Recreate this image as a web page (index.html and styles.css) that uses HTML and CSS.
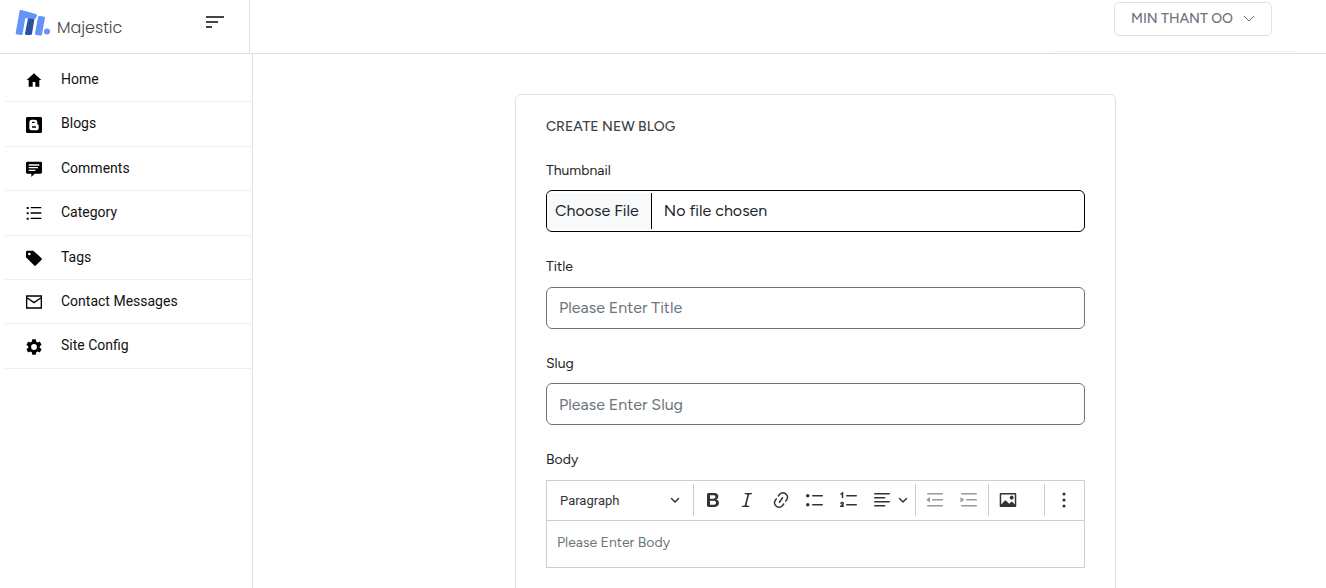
FILE: index.html
```html
<!DOCTYPE html>
<html lang="en">
<head>
<meta charset="utf-8">
<title>Majestic - Create New Blog</title>
<link rel="stylesheet" href="styles.css">
</head>
<body>
<div class="app">
  <header class="topbar">
    <div class="brand-area">
      <a class="brand" href="#">
        <svg class="brand-mark" width="36" height="28" viewBox="0 0 36 28" aria-hidden="true">
          <g stroke-width="3" stroke-linejoin="round">
            <path d="M14.500 9.500 18 9.500 15.500 24.500 11.500 24.500z" fill="#2c519f" stroke="#2c519f"/>
            <path d="M6 2.500 20.500 6.500 19.500 8.500 9 7.500 6.200 24.500 2.200 24z" fill="#6494fa" stroke="#6494fa"/>
            <path d="M24.500 8.500 28.500 9 25.500 25 21.500 24.500z" fill="#6494fa" stroke="#6494fa"/>
          </g>
          <circle cx="32" cy="22.500" r="3" fill="#6494fa"/>
        </svg>
        <span class="brand-name">Majestic</span>
      </a>
      <button class="icon-button" type="button" aria-label="Toggle menu">
        <svg width="20" height="14" viewBox="0 0 20 14" fill="none" stroke="#444" stroke-width="2" aria-hidden="true"><path d="M1 2h18M1 7h12M1 12h6"/></svg>
      </button>
    </div>
    <div class="user-area">
      <button class="user-button" type="button">MIN THANT OO
        <svg width="12" height="8" viewBox="0 0 12 8" fill="none" stroke="currentColor" aria-hidden="true"><path d="m1 2 5 5 5-5"/></svg>
      </button>
    </div>
  </header>
  <div class="body-row">
    <nav class="sidebar" aria-label="Main">
      <a class="nav-item" href="#"><svg viewBox="0 0 24 24" aria-hidden="true"><path d="M12 2 1 12h3v10h6v-7h4v7h6V12h3z"/></svg>Home</a>
      <a class="nav-item" href="#"><svg viewBox="0 0 24 24" aria-hidden="true"><path fill-rule="evenodd" d="M2 0h20a2 2 0 0 1 2 2v20a2 2 0 0 1-2 2H2a2 2 0 0 1-2-2V2a2 2 0 0 1 2-2zm7 4a4 4 0 0 0-4 4v8a4 4 0 0 0 4 4h6a4 4 0 0 0 4-4v-3a2 2 0 0 0-2-2V8a4 4 0 0 0-4-4zm0 3h4v2H9zm0 7h6v2H9z"/></svg>Blogs</a>
      <a class="nav-item" href="#"><svg viewBox="0 0 24 24" aria-hidden="true"><path fill-rule="evenodd" d="M2 1h20a2 2 0 0 1 2 2v14a2 2 0 0 1-2 2h-9l-5 5v-5H2a2 2 0 0 1-2-2V3a2 2 0 0 1 2-2zm2 4v2h16V5zm0 4v2h14V9zm0 4v2h10v-2z"/></svg>Comments</a>
      <a class="nav-item" href="#"><svg viewBox="0 0 24 24" aria-hidden="true"><path d="M1 3h3v3H1zm6 0h16v2H7zM1 11h3v3H1zm6 0h16v2H7zM1 19h3v3H1zm6 0h16v2H7z"/></svg>Category</a>
      <a class="nav-item" href="#"><svg viewBox="0 0 24 24" aria-hidden="true"><path fill-rule="evenodd" d="M2 1h9l12 11a2 2 0 0 1 0 3l-8 8a2 2 0 0 1-3 0L0 11V3a2 2 0 0 1 2-2zm3 3a2 2 0 1 0 0 4 2 2 0 0 0 0-4z"/></svg>Tags</a>
      <a class="nav-item" href="#"><svg viewBox="0 0 24 24" stroke="#000" stroke-width="2" aria-hidden="true"><path fill="none" d="M1 3h22v18H1zM2 6l10 7 10-7"/></svg>Contact Messages</a>
      <a class="nav-item" href="#"><svg viewBox="2 2 20 20" aria-hidden="true"><path d="M19.140 12.940c.04-.3.06-.61.06-.94s-.02-.64-.07-.94l2.030-1.580a.49.49 0 0 0 .12-.61l-1.920-3.320a.49.49 0 0 0-.59-.22l-2.390.96a7 7 0 0 0-1.620-.94l-.36-2.540a.48.48 0 0 0-.48-.41h-3.840a.48.48 0 0 0-.47.41l-.36 2.540a7 7 0 0 0-1.620.94l-2.390-.96a.48.48 0 0 0-.59.22L2.740 8.870a.48.48 0 0 0 .12.61l2.030 1.580a6 6 0 0 0 0 1.880l-2.030 1.580a.49.49 0 0 0-.12.61l1.920 3.320c.12.22.37.29.59.22l2.390-.96c.5.38 1.030.7 1.620.94l.36 2.540c.05.24.24.41.48.41h3.840c.24 0 .44-.17.47-.41l.36-2.540a7 7 0 0 0 1.620-.94l2.390.96c.22.08.47 0 .59-.22l1.920-3.320a.48.48 0 0 0-.12-.61zM12 15.600A3.600 3.600 0 1 1 12 8.400a3.600 3.600 0 0 1 0 7.200z"/></svg>Site Config</a>
    </nav>
    <main class="content">
      <form class="card">
        <h1 class="card-title">CREATE NEW BLOG</h1>
        <div class="field">
          <label for="thumbnail">Thumbnail</label>
          <input class="control file-control" id="thumbnail" type="file">
        </div>
        <div class="field">
          <label for="title">Title</label>
          <input class="control" id="title" type="text" placeholder="Please Enter Title">
        </div>
        <div class="field">
          <label for="slug">Slug</label>
          <input class="control" id="slug" type="text" placeholder="Please Enter Slug">
        </div>
        <div class="field">
          <label for="body">Body</label>
          <div class="editor">
            <div class="toolbar" role="toolbar" aria-label="Editor toolbar">
              <select class="heading-select" aria-label="Heading"><option>Paragraph</option><option>Heading 1</option></select>
              <span class="separator"></span>
              <button class="tool" type="button" aria-label="Bold"><svg viewBox="0 0 20 20"><path d="M10.187 17H5.773c-.637 0-1.092-.138-1.364-.415-.273-.277-.409-.718-.409-1.323V4.738c0-.617.14-1.062.419-1.332.279-.27.73-.406 1.354-.406h4.680c.69 0 1.288.041 1.793.124.506.083.96.242 1.360.478.341.197.644.447.906.75a3.262 3.262 0 0 1 .808 2.162c0 1.401-.722 2.426-2.167 3.075C15.050 10.175 16 11.315 16 13.010a3.756 3.756 0 0 1-2.296 3.504 6.100 6.100 0 0 1-1.517.377c-.571.073-1.238.11-2 .11zm-.217-6.217H7v4.087h3.069c1.977 0 2.965-.69 2.965-2.072 0-.707-.256-1.220-.768-1.537-.512-.319-1.277-.478-2.296-.478zM7 5.130v3.619h2.606c.729 0 1.292-.067 1.690-.2a1.600 1.600 0 0 0 .91-.765c.165-.267.247-.566.247-.897 0-.707-.26-1.176-.778-1.409-.519-.232-1.310-.348-2.375-.348z"/></svg></button>
              <button class="tool" type="button" aria-label="Italic"><svg viewBox="0 0 20 20"><path d="m9.586 14.633.021.004c-.036.335.095.655.393.962.082.083.173.15.274.201h1.474a.6.6 0 1 1 0 1.200H5.304a.6.6 0 0 1 0-1.200h1.150c.474-.07.809-.182 1.005-.334.157-.122.291-.32.404-.597l2.416-9.550a1.053 1.053 0 0 0-.281-.823 1.120 1.120 0 0 0-.442-.296H8.150a.6.6 0 0 1 0-1.200h6.443a.6.6 0 1 1 0 1.200h-1.195c-.376.056-.65.155-.823.296-.215.175-.423.439-.623.79z"/></svg></button>
              <button class="tool" type="button" aria-label="Link"><svg viewBox="0 0 20 20"><path d="m11.077 15 .991-1.416a.75.75 0 1 1 1.229.86l-1.148 1.640a.748.748 0 0 1-.217.206 5.251 5.251 0 0 1-8.503-5.955.741.741 0 0 1 .12-.274l1.147-1.639a.75.75 0 1 1 1.228.86L4.933 10.700l.006.003a3.750 3.750 0 0 0 6.132 4.294zm5.494-5.335a.748.748 0 0 1-.12.274l-1.147 1.639a.75.75 0 1 1-1.228-.86l.86-1.230a3.750 3.750 0 0 0-6.144-4.301l-.86 1.229a.75.75 0 0 1-1.229-.86l1.148-1.640a.748.748 0 0 1 .217-.206 5.251 5.251 0 0 1 8.503 5.955zm-4.563-2.532a.75.75 0 0 1 .184 1.045l-3.155 4.505a.75.75 0 1 1-1.229-.86l3.155-4.506a.75.75 0 0 1 1.045-.184z"/></svg></button>
              <button class="tool" type="button" aria-label="Bulleted list"><svg viewBox="0 0 20 20"><circle cx="2.750" cy="5.750" r="1.750"/><circle cx="2.750" cy="14.750" r="1.750"/><path class="line" d="M7.750 5.750h9.500M7.750 14.750h9.500"/></svg></button>
              <button class="tool" type="button" aria-label="Numbered list"><svg viewBox="0 0 20 20"><path class="line" d="M7.750 5.750h9.500M7.750 14.750h9.500"/><path class="line" d="M2 4 3.500 3v4.500M2 13.300c.2-1.200 2.300-1.100 2.300.1 0 .9-1.500 1.600-2.300 2.800h2.500"/></svg></button>
              <button class="tool tool-wide" type="button" aria-label="Text alignment"><svg viewBox="0 0 20 20"><path class="line" d="M2.750 3.750h14.500M2.750 7.750h9.900M2.750 11.750h14.500M2.750 15.750h9.900"/></svg><svg class="caret" viewBox="0 0 10 10"><path class="line" d="m1.500 3.500 3.500 3.500 3.500-3.500"/></svg></button>
              <span class="separator"></span>
              <button class="tool" type="button" aria-label="Decrease indent" disabled><svg viewBox="0 0 20 20"><path class="line" d="M2.750 3.750h14.500M7.750 9.750h9.500M2.750 15.750h14.500"/><path d="M5 7v5.500L1.200 9.750z"/></svg></button>
              <button class="tool" type="button" aria-label="Increase indent" disabled><svg viewBox="0 0 20 20"><path class="line" d="M2.750 3.750h14.500M7.750 9.750h9.500M2.750 15.750h14.500"/><path d="M1.500 7v5.500L5.300 9.750z"/></svg></button>
              <span class="separator"></span>
              <button class="tool" type="button" aria-label="Insert image"><svg viewBox="0 0 20 20"><path d="M6.910 10.540c.26-.23.64-.21.88.03l3.360 3.140 2.230-2.060a.64.64 0 0 1 .87 0l2.520 2.970V4.500H3.200v10.120zm10.270-7.510c.6 0 1.090.47 1.090 1.050v11.840c0 .59-.49 1.060-1.090 1.060H2.790c-.6 0-1.090-.47-1.090-1.060V4.080c0-.58.49-1.050 1.100-1.050zm-5.220 5.560a1.960 1.960 0 1 1 3.400-1.960 1.960 1.960 0 0 1-3.400 1.960z"/></svg></button>
              <span class="separator separator-end"></span>
              <button class="tool" type="button" aria-label="Show more items"><svg viewBox="0 0 20 20"><circle cx="10" cy="4" r="1.600"/><circle cx="10" cy="10" r="1.600"/><circle cx="10" cy="16" r="1.600"/></svg></button>
            </div>
            <textarea class="editor-body" id="body" rows="1" placeholder="Please Enter Body"></textarea>
          </div>
        </div>
      </form>
    </main>
  </div>
</div>
</body>
</html>
```

FILE: styles.css
```css
* {
  box-sizing: border-box;
}

body {
  margin: 0;
  background: #fff;
  color: #212529;
  font-family: Figtree, Lato, sans-serif;
  font-size: 16px;
}

button,
input,
select,
textarea {
  font: inherit;
  color: inherit;
}

button {
  padding: 0;
  border: 0;
  background: none;
}

.app {
  display: flex;
  flex-direction: column;
  height: 100vh;
  overflow: hidden;
}

.topbar {
  display: flex;
  flex: none;
  border-bottom: 1px solid #dee2e6;
}

.brand-area {
  display: flex;
  align-items: flex-start;
  justify-content: space-between;
  width: 250px;
  height: 53px;
  padding: 9px 24px 0 15px;
  border-right: 1px solid #dee2e6;
}

.brand {
  display: flex;
  align-items: flex-end;
  gap: 6px;
  color: #444;
  text-decoration: none;
}

.brand-name {
  font-family: Poppins, Lato, sans-serif;
  font-weight: 300;
  font-size: 16px;
  line-height: 18px;
}

.icon-button,
.icon-button svg,
.brand-mark {
  display: block;
}

.icon-button {
  padding-top: 6px;
}

.user-area {
  display: flex;
  justify-content: flex-end;
  align-items: flex-start;
  width: 242px;
  margin: 0 30px 0 auto;
  padding: 2px 24px 0 0;
  height: 52px;
  border-bottom: 1px solid #f1f1f1;
}

.user-button {
  display: flex;
  align-items: center;
  gap: 10px;
  height: 34px;
  padding: 0 16px 2px;
  border: 1px solid #dee2e6;
  border-radius: 5px;
  color: #6c757d;
  font-size: 14px;
  font-weight: 500;
}

.body-row {
  display: flex;
  flex: 1;
  min-height: 0;
}

.sidebar {
  flex: none;
  width: 253px;
  padding: 4px 0 0 5px;
  border-right: 1px solid #dee2e6;
}

.nav-item {
  display: flex;
  align-items: center;
  gap: 19px;
  padding: 10px 0 11px 21px;
  border-bottom: 1px solid #f0f0f0;
  color: #111;
  font-family: Roboto, sans-serif;
  font-size: 14px;
  line-height: 1.6;
  text-decoration: none;
}

.nav-item svg {
  width: 16px;
  height: 16px;
  margin-top: 2px;
  fill: #000;
}

.content {
  flex: 1;
  padding: 40px 0 0 52px;
  overflow: auto;
  scrollbar-width: none;
}

.card {
  max-width: 601px;
  margin: 0 auto;
  padding: 20px 30px 60px;
  border: 1px solid #dee2e6;
  border-radius: 6px;
}

.card-title {
  margin: 0 0 21px;
  color: #444;
  font-size: 14px;
  font-weight: 500;
  line-height: 24px;
}

.field {
  margin-bottom: 24px;
}

.field label {
  display: block;
  margin-bottom: 8px;
  font-size: 14px;
  line-height: 1.6;
}

.control {
  display: block;
  width: 100%;
  height: 42px;
  padding: 0 12px;
  border: 1px solid #6b7280;
  border-radius: 6px;
  background: #fff;
}

.control::placeholder,
.editor-body::placeholder {
  color: #6c757d;
  opacity: 1;
}

.file-control {
  padding: 2px 0;
  border-color: #000;
  line-height: 36px;
}

.file-control::file-selector-button {
  height: 36px;
  margin: 0 12px 0 0;
  padding: 0 12px 0 8px;
  border: 0;
  border-right: 1px solid #000;
  background: #f8f9fa;
  color: inherit;
  font: inherit;
}

.editor {
  border: 1px solid #ccced1;
}

.toolbar {
  display: flex;
  align-items: center;
  gap: 4px;
  height: 40px;
  padding: 0 5px 0 3px;
  border-bottom: 1px solid #ccced1;
  color: #333;
}

.heading-select {
  width: 139px;
  height: 30px;
  padding: 0 10px;
  border: 0;
  appearance: none;
  background: url("data:image/svg+xml,%3Csvg xmlns='http://www.w3.org/2000/svg' viewBox='0 0 10 10'%3E%3Cpath d='m1.500 3.500 3.500 3.500 3.500-3.500' fill='none' stroke='%23333' stroke-width='1.500' stroke-linecap='round'/%3E%3C/svg%3E") right 9px center / 10px 10px no-repeat;
  font-family: Roboto, sans-serif;
  font-size: 13px;
}

.separator {
  flex: none;
  width: 1px;
  height: 32px;
  background: #ccced1;
}

.separator-end {
  margin-left: auto;
}

.tool {
  display: flex;
  flex: none;
  align-items: center;
  justify-content: center;
  gap: 6px;
  width: 30px;
  height: 30px;
}

.tool-wide {
  width: 43px;
}

.tool svg {
  width: 20px;
  height: 20px;
  fill: currentColor;
}

.tool .caret {
  width: 10px;
  height: 10px;
}

.tool .line {
  fill: none;
  stroke: currentColor;
  stroke-width: 1.5px;
  stroke-linecap: round;
}

.tool:disabled {
  color: #999;
}

.editor-body {
  display: block;
  width: 100%;
  height: 46px;
  padding: 10px;
  border: 0;
  resize: none;
  font-size: 14px;
  line-height: 24px;
}
```
